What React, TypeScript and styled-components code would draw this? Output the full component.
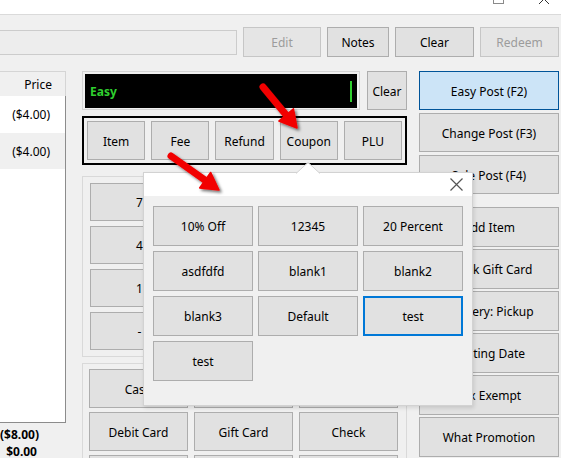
import React from "react";
import styled, { createGlobalStyle } from "styled-components";

const GlobalStyle = createGlobalStyle`
  html, body { margin: 0; padding: 0; background: #f0f0f0; }
  body {
    font-family: "Noto Sans", "Open Sans", sans-serif;
    font-size: 12px;
    color: #000;
  }
`;

const Window = styled.div`
  position: relative;
  width: 561px;
  height: 458px;
  overflow: hidden;
  background: #f0f0f0;
`;

const TitleBar = styled.div`
  height: 14px;
  background: #fff;
  border-bottom: 1px solid #dadada;
  display: flex;
  justify-content: flex-end;
`;

const Body = styled.div`
  padding-top: 12px;
`;

const Toolbar = styled.div`
  display: flex;
  align-items: center;
  gap: 6px;
  height: 30px;
`;

const SearchBox = styled.div`
  width: 237px;
  height: 25px;
  box-sizing: border-box;
  border: 1px solid #cccccc;
  border-left: none;
  background: #ededed;
`;

const Btn = styled.button<{ $w?: number; $h?: number; $variant?: "default" | "disabled" | "primary" | "focused" }>`
  width: ${(p) => (p.$w ? `${p.$w}px` : "100%")};
  height: ${(p) => (p.$h ? `${p.$h}px` : "100%")};
  box-sizing: border-box;
  margin: 0;
  padding: 1px 0 0;
  font: inherit;
  display: flex;
  align-items: center;
  justify-content: center;
  white-space: nowrap;
  overflow: hidden;
  background: ${(p) => (p.$variant === "primary" ? "#cce4f7" : p.$variant === "disabled" ? "#e5e5e5" : "#e1e1e1")};
  color: ${(p) => (p.$variant === "disabled" ? "#9c9c9c" : "#000")};
  border: ${(p) =>
    p.$variant === "primary"
      ? "1px solid #005499"
      : p.$variant === "focused"
      ? "2px solid #0078d7"
      : p.$variant === "disabled"
      ? "1px solid #c6c6c6"
      : "1px solid #adadad"};
`;

const Main = styled.div`
  display: flex;
  margin-top: 14px;
  align-items: flex-start;
`;

const ListCol = styled.div`
  width: 66px;
  display: flex;
  flex-direction: column;
`;

const ListHeader = styled.div`
  height: 25px;
  box-sizing: border-box;
  border-top: 1px solid #d5d5d5;
  border-right: 1px solid #d5d5d5;
  display: flex;
  align-items: center;
  justify-content: flex-end;
  padding-right: 13px;
`;

const ListBody = styled.div`
  height: 327px;
  box-sizing: border-box;
  background: #fff;
  border-right: 1px solid #8c8c8c;
  border-bottom: 1px solid #8c8c8c;
  display: flex;
  flex-direction: column;
  gap: 1px;
`;

const ListRow = styled.div<{ $alt?: boolean }>`
  height: 36px;
  display: flex;
  align-items: center;
  justify-content: flex-end;
  padding-right: 15px;
  background: ${(p) => (p.$alt ? "#f0f0f0" : "#fff")};
`;

const Totals = styled.div`
  width: 37px;
  margin-top: 3px;
  font-weight: bold;
  text-align: right;
  line-height: 17px;
`;

const MiddleCol = styled.div`
  width: 325px;
  margin-left: 16px;
  display: flex;
  flex-direction: column;
`;

const DisplayRow = styled.div`
  display: flex;
  gap: 7px;
  height: 39px;
`;

const Display = styled.div`
  width: 278px;
  box-sizing: border-box;
  border: 1px solid #d4d4d4;
  padding: 2px;
`;

const Screen = styled.div`
  height: 100%;
  background: #000;
  display: flex;
  align-items: center;
  justify-content: space-between;
  padding: 1px 5px 0;
  color: #2fcf2f;
  font-weight: bold;
`;

const Caret = styled.div`
  width: 2px;
  height: 21px;
  background: #2fcf2f;
`;

const KeysBox = styled.div`
  margin-top: 6px;
  height: 49px;
  box-sizing: border-box;
  border: 2px solid #000;
  padding: 3px;
  display: flex;
  gap: 6px;
`;

const Panel = styled.div<{ $top: number; $h: number; $pad: number; $gap: number; $row: number }>`
  margin-top: ${(p) => p.$top}px;
  height: ${(p) => p.$h}px;
  box-sizing: border-box;
  border: 1px solid #d9d9d9;
  padding: ${(p) => p.$pad}px ${(p) => p.$pad + 1}px;
  display: grid;
  grid-template-columns: repeat(3, 99px);
  grid-auto-rows: ${(p) => p.$row}px;
  column-gap: 6px;
  row-gap: ${(p) => p.$gap}px;
  overflow: hidden;
`;

const RightCol = styled.div`
  width: 140px;
  margin-left: 12px;
  display: flex;
  flex-direction: column;
`;

const BtnStack = styled.div<{ $gap: number; $top?: number }>`
  display: flex;
  flex-direction: column;
  gap: ${(p) => p.$gap}px;
  margin-top: ${(p) => p.$top ?? 0}px;
`;

const Popup = styled.div`
  position: absolute;
  left: 143px;
  top: 172px;
  width: 330px;
  height: 234px;
  box-sizing: border-box;
  border: 1px solid #d2d2d2;
  background: #f0f0f0;
  box-shadow: 1px 2px 4px rgba(0, 0, 0, 0.12);
  display: flex;
  flex-direction: column;
`;

const PopupHeader = styled.div`
  height: 23px;
  background: #fff;
  display: flex;
  justify-content: flex-end;
  align-items: center;
  padding-right: 9px;
`;

const PopupGrid = styled.div`
  padding: 10px 9px;
  display: grid;
  grid-template-columns: repeat(3, 100px);
  grid-auto-rows: 40px;
  gap: 5px;
`;

const Notch = styled.svg`
  position: absolute;
  left: 296px;
  top: 162px;
  z-index: 2;
`;

const Overlay = styled.svg`
  position: absolute;
  left: 0;
  top: 0;
  pointer-events: none;
  z-index: 3;
`;

const keys = ["Item", "Fee", "Refund", "Coupon", "PLU"];
const pad = ["7", "8", "9", "4", "5", "6", "1", "2", "3", "-", "0", "."];
const payments = ["Cash", "Credit Card", "Account", "Debit Card", "Gift Card", "Check", "EBT", "Other", "Split"];
const posts = ["Easy Post (F2)", "Change Post (F3)", "Sale Post (F4)"];
const actions = ["Add Item", "Check Gift Card", "Delivery: Pickup", "Posting Date", "Tax Exempt", "What Promotion"];
const coupons = ["10% Off", "12345", "20 Percent", "asdfdfd", "blank1", "blank2", "blank3", "Default", "test", "test"];

function Arrow({ x1, y1, x2, y2 }: { x1: number; y1: number; x2: number; y2: number }) {
  const dx = x2 - x1;
  const dy = y2 - y1;
  const len = Math.hypot(dx, dy);
  const ux = dx / len;
  const uy = dy / len;
  const px = -uy;
  const py = ux;
  const hl = 17;
  const hw = 9.5;
  const bx = x2 - ux * hl;
  const by = y2 - uy * hl;
  return (
    <g filter="url(#shadow)">
      <line x1={x1} y1={y1} x2={bx + ux * 2} y2={by + uy * 2} stroke="#f20000" strokeWidth={7} strokeLinecap="round" />
      <polygon
        points={`${x2},${y2} ${bx + px * hw},${by + py * hw} ${bx - px * hw},${by - py * hw}`}
        fill="#f20000"
        stroke="#f20000"
        strokeWidth={1.5}
        strokeLinejoin="round"
      />
    </g>
  );
}

export default function App() {
  return (
    <Window>
      <GlobalStyle />
      <TitleBar>
        <svg width={70} height={14}>
          <rect x={2.5} y={-6.5} width={10} height={10} fill="none" stroke="#8a8a8a" />
          <path d="M48 -6 L58 4 M58 -6 L48 4" stroke="#333" strokeWidth={1} />
        </svg>
      </TitleBar>
      <Body>
        <Toolbar>
          <SearchBox />
          <Btn $w={78} $h={30} $variant="disabled">Edit</Btn>
          <Btn $w={62} $h={30}>Notes</Btn>
          <Btn $w={79} $h={30}>Clear</Btn>
          <Btn $w={79} $h={30} $variant="disabled">Redeem</Btn>
        </Toolbar>
        <Main>
          <ListCol>
            <ListHeader>Price</ListHeader>
            <ListBody>
              <ListRow>($4.00)</ListRow>
              <ListRow $alt>($4.00)</ListRow>
            </ListBody>
            <Totals>
              <div>($8.00)</div>
              <div>$0.00</div>
            </Totals>
          </ListCol>
          <MiddleCol>
            <DisplayRow>
              <Display>
                <Screen>
                  <span>Easy</span>
                  <Caret />
                </Screen>
              </Display>
              <Btn $w={40}>Clear</Btn>
            </DisplayRow>
            <KeysBox>
              {keys.map((k) => (
                <Btn key={k}>{k}</Btn>
              ))}
            </KeysBox>
            <Panel $top={11} $h={181} $pad={6} $gap={5} $row={38}>
              {pad.map((k) => (
                <Btn key={k}>{k}</Btn>
              ))}
            </Panel>
            <Panel $top={6} $h={120} $pad={5} $gap={4} $row={39}>
              {payments.map((k) => (
                <Btn key={k}>{k}</Btn>
              ))}
            </Panel>
          </MiddleCol>
          <RightCol>
            <BtnStack $gap={3}>
              {posts.map((k, i) => (
                <Btn key={k} $h={39} $variant={i === 0 ? "primary" : "default"}>
                  {k}
                </Btn>
              ))}
            </BtnStack>
            <BtnStack $gap={2} $top={13}>
              {actions.map((k) => (
                <Btn key={k} $h={40}>
                  {k}
                </Btn>
              ))}
            </BtnStack>
          </RightCol>
        </Main>
      </Body>

      <Notch width={24} height={12}>
        <polygon points="0,11.5 12,0.5 24,11.5" fill="#fff" />
        <polyline points="0,11.5 12,0.5 24,11.5" fill="none" stroke="#d2d2d2" />
      </Notch>
      <Popup>
        <PopupHeader>
          <svg width={13} height={13} viewBox="0 0 13 13">
            <path d="M0.5 0.5 L12.5 12.5 M12.5 0.5 L0.5 12.5" stroke="#555" strokeWidth={1.2} />
          </svg>
        </PopupHeader>
        <PopupGrid>
          {coupons.map((c, i) => (
            <Btn key={i} $variant={i === 8 ? "focused" : "default"}>
              {c}
            </Btn>
          ))}
        </PopupGrid>
      </Popup>

      <Overlay width={561} height={458}>
        <defs>
          <filter id="shadow" x="-30%" y="-30%" width="160%" height="160%">
            <feDropShadow dx={2} dy={2} stdDeviation={1.6} floodColor="#000" floodOpacity={0.55} />
          </filter>
        </defs>
        <Arrow x1={263} y1={87} x2={297} y2={128} />
        <Arrow x1={171} y1={156} x2={219} y2={190} />
      </Overlay>
    </Window>
  );
}
